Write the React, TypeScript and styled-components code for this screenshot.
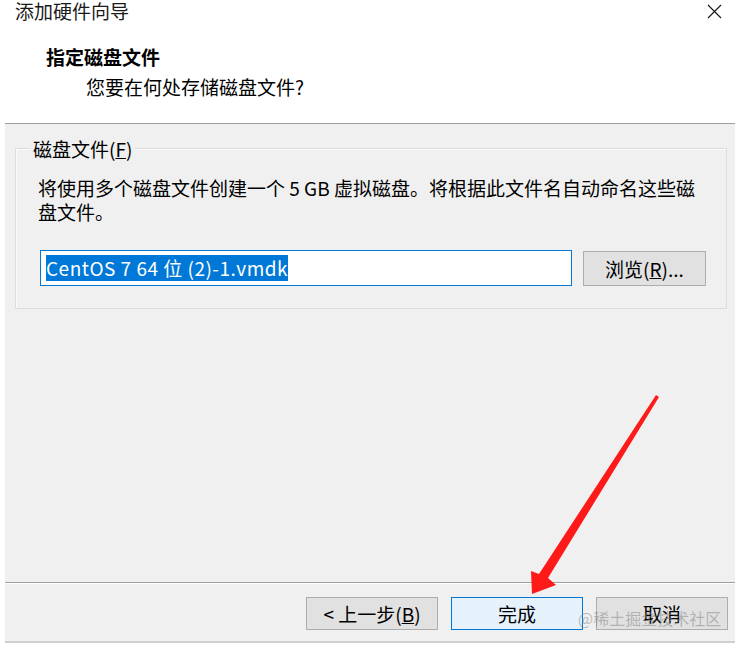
import React from "react";
import styled, { createGlobalStyle } from "styled-components";

const Global = createGlobalStyle`
  html, body { margin: 0; padding: 0; background: #ffffff; }
  body { font-family: "Noto Sans CJK SC", "Noto Sans", sans-serif; color: #000; }
  * { box-sizing: border-box; }
`;

const Window = styled.div`
  position: relative;
  width: 735px;
  height: 647px;
  background: #ffffff;
  display: flex;
  flex-direction: column;
  overflow: hidden;
  font-size: 19px;
`;

const TitleBar = styled.div`
  height: 24px;
  display: flex;
  align-items: center;
  justify-content: space-between;
  padding: 0 13px 2px 15px;
`;

const TitleText = styled.span`
  font-size: 19px;
  line-height: 22px;
  color: #1a1a1a;
`;

const Header = styled.div`
  height: 99px;
  display: flex;
  flex-direction: column;
  padding-top: 20px;
`;

const Heading = styled.div`
  padding-left: 46px;
  font-weight: 700;
  font-size: 19px;
  line-height: 26px;
`;

const SubHeading = styled.div`
  padding-left: 86px;
  margin-top: 4px;
  font-size: 19px;
  line-height: 26px;
`;

const Body = styled.div`
  flex: 1;
  margin: 0 0 4px 5px;
  background: #f0f0f0;
  border-top: 1px solid #a0a0a0;
  border-bottom: 2px solid #d0d0d0;
  display: flex;
  flex-direction: column;
`;

const Content = styled.div`
  flex: 1;
  padding: 24px 8px 0 10px;
`;

const GroupBox = styled.div`
  position: relative;
  height: 161px;
  border: 1px solid #dcdcdc;
  box-shadow: inset 1px 1px 0 #fbfbfb;
  padding: 27px 20px 0 22px;
  display: flex;
  flex-direction: column;
`;

const GroupLabel = styled.span`
  position: absolute;
  top: -12px;
  left: 14px;
  padding: 0 3px;
  background: #f0f0f0;
  line-height: 24px;
  font-size: 19px;
`;

const Description = styled.p`
  margin: 0;
  width: 664px;
  font-size: 19px;
  line-height: 24px;
`;

const FileRow = styled.div`
  display: flex;
  align-items: flex-start;
  gap: 11px;
  margin-top: 26px;
  padding-left: 2px;
`;

const FileInput = styled.div`
  width: 532px;
  height: 36px;
  background: #ffffff;
  border: 1px solid #0078d7;
  padding: 3px 5px;
  display: flex;
  align-items: center;
`;

const Selected = styled.span`
  background: #0078d7;
  color: #ffffff;
  font-size: 19px;
  line-height: 26px;
  letter-spacing: 0.5px;
  white-space: nowrap;
`;

const Button = styled.button<{ $primary?: boolean; $w?: number; $h?: number }>`
  width: ${(p) => p.$w ?? 132}px;
  height: ${(p) => p.$h ?? 33}px;
  margin: 0;
  padding: 0;
  font-family: inherit;
  font-size: 19px;
  line-height: 24px;
  color: #000;
  background: ${(p) => (p.$primary ? "#e5f1fb" : "#e1e1e1")};
  border: 1px solid ${(p) => (p.$primary ? "#0078d7" : "#adadad")};
  display: flex;
  align-items: center;
  justify-content: center;
`;

const BrowseButton = styled(Button)`
  margin-top: 1px;
`;

const Footer = styled.div`
  height: 59px;
  border-top: 1px solid #a0a0a0;
  box-shadow: inset 0 1px 0 #ffffff;
  display: flex;
  justify-content: flex-end;
  align-items: flex-start;
  gap: 13px;
  padding: 14px 7px 0 0;
`;

const Watermark = styled.span`
  position: absolute;
  left: 578px;
  top: 606px;
  font-size: 16px;
  line-height: 24px;
  color: rgba(130, 130, 130, 0.5);
  white-space: nowrap;
  pointer-events: none;
`;

const ArrowLayer = styled.svg`
  position: absolute;
  left: 0;
  top: 0;
  pointer-events: none;
`;

const CloseIcon = () => (
  <svg width="15" height="15" viewBox="0 0 15 15">
    <path d="M1 1 L14 14 M14 1 L1 14" stroke="#1a1a1a" strokeWidth="1.2" fill="none" />
  </svg>
);

export default function App() {
  return (
    <>
      <Global />
      <Window>
        <TitleBar>
          <TitleText>添加硬件向导</TitleText>
          <CloseIcon />
        </TitleBar>
        <Header>
          <Heading>指定磁盘文件</Heading>
          <SubHeading>您要在何处存储磁盘文件?</SubHeading>
        </Header>
        <Body>
          <Content>
            <GroupBox>
              <GroupLabel>
                磁盘文件(<u>F</u>)
              </GroupLabel>
              <Description>
                将使用多个磁盘文件创建一个 5 GB 虚拟磁盘。将根据此文件名自动命名这些磁盘文件。
              </Description>
              <FileRow>
                <FileInput>
                  <Selected>CentOS 7 64 位 (2)-1.vmdk</Selected>
                </FileInput>
                <BrowseButton $w={123} $h={35}>
                  浏览(<u>R</u>)...
                </BrowseButton>
              </FileRow>
            </GroupBox>
          </Content>
          <Footer>
            <Button>
              &lt; 上一步(<u>B</u>)
            </Button>
            <Button $primary>完成</Button>
            <Button>取消</Button>
          </Footer>
        </Body>
        <Watermark>@稀土掘金技术社区</Watermark>
        <ArrowLayer width="735" height="647" viewBox="0 0 735 647">
          <polygon
            points="656,395 659,397 548,578 556,585 532,594 531,571 539,574"
            fill="#ff1a1a"
          />
        </ArrowLayer>
      </Window>
    </>
  );
}
